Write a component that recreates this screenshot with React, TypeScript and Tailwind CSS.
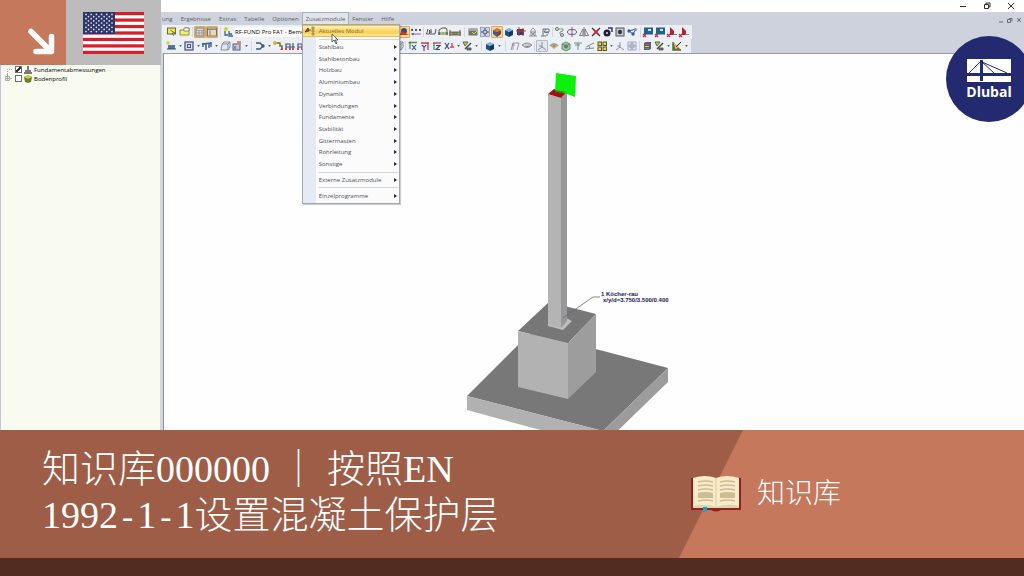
import React, { useState } from 'react';

type Tool = string;

const MENUS_LEFT = ['ung', 'Ergebnisse', 'Extras', 'Tabelle', 'Optionen'];
const MENUS_RIGHT = ['Fenster', 'Hilfe'];

const MODULES = [
  'Stahlbau',
  'Stahlbetonbau',
  'Holzbau',
  'Aluminiumbau',
  'Dynamik',
  'Verbindungen',
  'Fundamente',
  'Stabilität',
  'Gittermasten',
  'Rohrleitung',
  'Sonstige',
];

// '>' = drop-down caret, '|' = separator, '*' prefix = pressed button
const TOOLS_FILE: Tool[] = ['note', 'folder', '|4', '*table', '*window', '|4', 'module'];
const TOOLS_VIEW: Tool[] = [
  '*results', 'values', '|3', 'glasses', 'printer', 'ruler', '|6',
  'image', 'target', '*cubeRed', 'cubeBlue', 'cubeDark', 'tower', 'crane', '|3',
  'link', 'rotate', 'mirror', 'cross', 'sphere', 'camera', 'nodes', '|4',
  'screen', 'screen', 'flagRed', 'flagRed',
];
const TOOLS_MODEL: Tool[] = [
  'plate', '>', 'square', '>', 'columns', '>', 'box', 'boxPlus', '>', '|5',
  'beam', '>', 'support', 'frame', 'frame', 'frame', 'support', 'box', 'beam',
  'square', 'plate', 'columns', 'box', '|3',
  'axisX', 'axisY', 'axisZ', 'axisR', '>', 'pencil', '>', '|5',
  'cubeBlue', '>', '|7', 'portal', 'eye', '|3',
  '*axes', 'rainbow', 'green', 'level', 'slope', 'grid', '>', 'axes', 'mesh', '|3',
  'palette', 'pencil', '>', 'chart', '>',
];

const GLYPHS: Record<string, React.ReactNode> = {
  note: <><rect x="1.5" y="2" width="8" height="6" fill="#f3e94e" stroke="#6b6a2a" /><path d="M4 4l5 3-3 0 2 3" fill="#fff" stroke="#555" strokeWidth=".8" /></>,
  folder: <><path d="M2 4h4l1-2h4v7H2z" fill="#f6ef62" stroke="#77783c" strokeWidth=".8" /><path d="M6 2h5v3H6z" fill="#fff" stroke="#666" strokeWidth=".7" /></>,
  table: <><rect x="2" y="2" width="8" height="8" fill="#ddd" stroke="#777" /><path d="M2 4.5h8M5 4.5v5M8 4.5v5M2 7h8" stroke="#888" strokeWidth=".7" /></>,
  window: <><rect x="1.5" y="2" width="9" height="8" fill="#e8d9bb" stroke="#777" /><path d="M2 3.5h8M4 4v6" stroke="#888" /></>,
  module: <><circle cx="4" cy="3" r="2" fill="#c9d928" /><path d="M3 5v4h3M7 5v5h4M7 8h3" fill="none" stroke="#4b6278" strokeWidth="1.3" /></>,
  results: <><circle cx="6" cy="5" r="3" fill="#2e4d80" /><path d="M1 9l3-4 3 2 4 2z" fill="#c63d2b" /></>,
  values: <><path d="M1 3l2 2m0-2L1 5m4-2l2 2m0-2L5 5m4-2l2 2m0-2L9 5" stroke="#333" strokeWidth=".8" /><path d="M1 8h10" stroke="#9a5fa8" /><circle cx="3" cy="8" r="1" fill="#32549c" /></>,
  glasses: <path d="M3 3L1.500 8h3V4M7 8h3l1-5M6 9V3M4.500 6h2" fill="none" stroke="#555" />,
  printer: <><path d="M2 8V4l3-2h4l1 2v4z" fill="#eee" stroke="#555" /><path d="M1 6h10v3H1z" fill="#6c7180" /><path d="M4 9V6h1v3m2 0V6h1v3" stroke="#d6e36c" /></>,
  ruler: <><path d="M1 4v6M11 4v6" stroke="#555" /><rect x="1" y="6" width="10" height="3" fill="#a9ad72" stroke="#444" strokeWidth=".7" /><path d="M4 6v3M6 6v3M8 6v3" stroke="#333" strokeWidth=".6" /></>,
  image: <><rect x="1.500" y="2.500" width="9" height="7" fill="#6a7568" /><path d="M2 4h8" stroke="#ddd" /><path d="M5 6l2 2 3-3" stroke="#e6c94c" fill="none" /></>,
  target: <><rect x="1.500" y="1.500" width="9" height="9" fill="#cdd2e4" stroke="#8188a8" strokeWidth=".7" /><circle cx="6" cy="6" r="2" fill="none" stroke="#374b83" /><path d="M6 2v2M6 8v2M2 6h2M8 6h2" stroke="#374b83" strokeWidth=".8" /></>,
  cubeRed: <><path d="M2 4l4-2 4 2-4 2z" fill="#e2694a" /><path d="M2 4l4 2v5L2 8z" fill="#2a66a1" /><path d="M10 4L6 6v5l4-3z" fill="#83422c" /></>,
  cubeBlue: <><path d="M2 4l4-2 4 2-4 2z" fill="#7ab4dc" /><path d="M2 4l4 2v5L2 9z" fill="#1f4f86" /><path d="M10 4L6 6v5l4-2z" fill="#16375c" /></>,
  cubeDark: <><rect x="2" y="3" width="7" height="6" fill="#25406f" /><path d="M4 1v9M8 2v8M1 5h10" stroke="#c23a3f" /></>,
  tower: <path d="M4 10V4l2-2 2 2v6M3 6h6M4 10l4-4M8 10L4 6M2 10h8" fill="none" stroke="#888" strokeWidth=".9" />,
  crane: <path d="M2 10h5M4 10V3h6v3H5M7 3L5 6l5 1M8 8v2" fill="none" stroke="#6a7082" />,
  link: <><circle cx="3" cy="3" r="1.500" fill="none" stroke="#666" /><circle cx="8" cy="9" r="1.500" fill="none" stroke="#666" /><path d="M5 3h4v2L6 6v2" fill="none" stroke="#777" strokeWidth=".8" /></>,
  rotate: <><ellipse cx="6" cy="6" rx="4.500" ry="2.500" fill="none" stroke="#44609d" /><path d="M6 1v10" stroke="#b04d53" /></>,
  mirror: <path d="M5 3L1.500 9.500H5zM7 3l3.500 6.500H7zM6 1v10" fill="none" stroke="#666" strokeWidth=".8" />,
  cross: <><path d="M2 2l8 8M10 2l-8 8" stroke="#333" strokeWidth="1.200" /><path d="M3.500 3.500l5 5M8.500 3.500l-5 5" stroke="#d42332" strokeWidth="1.500" /></>,
  sphere: <><circle cx="5" cy="7" r="3.500" fill="#20203c" /><path d="M6 2h4v4" fill="none" stroke="#353560" strokeWidth="1.500" /><circle cx="5" cy="7" r="1" fill="#ddd" /></>,
  camera: <><rect x="2" y="2" width="8" height="8" fill="#c9ccd2" stroke="#555" /><circle cx="6" cy="6" r="2.200" fill="#32394a" /></>,
  nodes: <><path d="M3 5l4 3 3-5z" stroke="#33558e" fill="none" /><circle cx="3" cy="5" r="1.700" fill="#3c5a90" /><circle cx="7" cy="8" r="1.700" fill="#3c5a90" /><circle cx="9.500" cy="3.500" r="1.500" fill="#7a93bd" /></>,
  screen: <><rect x="2" y="1.500" width="9" height="7" fill="#23618e" /><rect x="6" y="3" width="3" height="2" fill="#cfe4f1" /><path d="M1 8l3 3M4 8l-3 3" stroke="#cf2c47" strokeWidth="1.400" /></>,
  flagRed: <><path d="M4 1l4 4v4H4z" fill="#b91f33" /><path d="M1 8l3 3M4 8l-3 3" stroke="#cf2c47" strokeWidth="1.200" /><path d="M7 8.500h4" stroke="#888" /></>,
  plate: <><path d="M3 5h7v4H3z" fill="#4f7a9a" /><path d="M2 9h9" stroke="#30485b" /><circle cx="3" cy="3" r="1.700" fill="#d9cf36" /></>,
  square: <><rect x="2" y="2" width="8" height="8" fill="#dce0ec" stroke="#4d5982" strokeWidth="1.300" /><rect x="4.500" y="4.500" width="3" height="3" fill="none" stroke="#4d5982" /></>,
  columns: <path d="M2 3v4M5 4v6M8 3v5M10 2v5M1 4l9-1" fill="none" stroke="#41658a" strokeWidth="1.500" />,
  box: <path d="M3 4h6v6H2zM3 4l2-2h6L9 4M11 2v5L9 10" fill="#e4e7ef" stroke="#7b8398" strokeWidth=".9" />,
  boxPlus: <><rect x="2" y="4" width="7" height="6" fill="#bec7d7" stroke="#57647f" /><path d="M6 1h4v4H6z" fill="#d98577" /><path d="M4 6v3" stroke="#33527d" /></>,
  beam: <><path d="M2 3h4l3 3-3 3H2" fill="none" stroke="#3d5578" strokeWidth="1.400" /><circle cx="9" cy="6" r="1.700" fill="#395c86" /></>,
  support: <><path d="M3 3h5v3h2v4" fill="none" stroke="#6b7434" strokeWidth="1.500" /><circle cx="3" cy="3" r="2" fill="#cdbc2b" /><path d="M8 10l2-3 1 3z" fill="#c93f4d" /></>,
  frame: <><path d="M2 10V4h4v6M9 10V3M2 7h9" fill="none" stroke="#485579" strokeWidth="1.200" /><path d="M1 9h2M5 9h2M8 9h2" stroke="#d33a4e" strokeWidth="1.500" /></>,
  axisX: <><path d="M3 2v7M3 2.500h7" fill="none" stroke="#2e9b63" strokeWidth="1.300" /><path d="M5 5l4 5M9 5l-4 5" stroke="#3a4873" strokeWidth="1.100" /><path d="M1.500 2.500h2" stroke="#d3394e" strokeWidth="1.500" /></>,
  axisY: <><path d="M2 3h8M9 3v7" fill="none" stroke="#d3394e" strokeWidth="1.300" /><path d="M3 5l2 2v4M7 5L5 7.500" stroke="#3a4873" fill="none" strokeWidth="1.100" /></>,
  axisZ: <><path d="M3 3v7" fill="none" stroke="#2e9b63" strokeWidth="1.300" /><path d="M2 3h8" stroke="#d3394e" strokeWidth="1.300" /><path d="M5 5.500h4l-4 4h4" stroke="#3a4873" fill="none" strokeWidth="1.100" /></>,
  axisR: <><path d="M2 3l4 6M6 3L2 9" stroke="#3a4873" strokeWidth="1.200" /><path d="M7 7h4M9 3v3" stroke="#d3394e" strokeWidth="1.300" /></>,
  pencil: <><path d="M2 2h5L4 6z" fill="#c8cf40" stroke="#444" strokeWidth=".8" /><path d="M10 3L4 9" stroke="#444" strokeWidth="1.400" /><path d="M6 8h4v2H6z" fill="#777" stroke="#444" strokeWidth=".8" /></>,
  portal: <path d="M2 10L4 3h6L8 10M3 5h3M4 3v7" fill="none" stroke="#8b8f97" strokeWidth=".9" />,
  eye: <><path d="M1 5q5-4 10 0q-5 5-10 0z" fill="#c9cbd1" stroke="#8b8f97" /><path d="M4 7l5-1" stroke="#888" /></>,
  axes: <path d="M6 2v5L2 10M6 7l4 3M3 6h3" fill="none" stroke="#7d879b" strokeWidth=".9" />,
  rainbow: <><path d="M1 6q5-6 10 0z" fill="#5bb2c9" /><path d="M2 6q4-3 8 0l-4 3z" fill="#d9ae59" /><circle cx="6" cy="6" r="1.300" fill="#cf6d72" /></>,
  green: <><path d="M2 4l4-2 4 2v5l-4 2-4-2z" fill="#9fc6a5" stroke="#5b9a70" /><circle cx="6" cy="6.500" r="2" fill="#37956d" /><path d="M2 4l4 2 4-2" stroke="#ba5d62" fill="none" /></>,
  level: <path d="M2 3h8M6 3v7M3 5h5" stroke="#798a86" fill="none" />,
  slope: <path d="M1 9l9-1M2 7l8-4M5 6l1 3" stroke="#858a92" fill="none" />,
  grid: <><rect x="2" y="2" width="3.500" height="3.500" fill="#e9d64a" stroke="#5b572c" /><rect x="7" y="2" width="3.500" height="3.500" fill="#e9d64a" stroke="#5b572c" /><rect x="2" y="7" width="3.500" height="3.500" fill="#e9d64a" stroke="#5b572c" /><rect x="7" y="7" width="3.500" height="3.500" fill="#e9d64a" stroke="#5b572c" /></>,
  mesh: <path d="M2 2h8v8H2zM6 2v8M2 6h8M4 4h4v4H4z" fill="none" stroke="#8a94ae" strokeWidth=".8" />,
  palette: <><path d="M3 3l2-1h5v7l-2 1H3z" fill="#5d616b" /><path d="M4 4.500h4" stroke="#db4b46" /><path d="M4 6.500h4" stroke="#e2cd49" /><path d="M4 8.500h4" stroke="#49a05e" /></>,
  chart: <><path d="M2 2v8h8z" fill="#da3131" /><path d="M2 2l3 4 5-4-5 8z" fill="#e7d83a" /><path d="M2 2v8h8" fill="none" stroke="#2b7d42" strokeWidth="1.400" /><path d="M5 7l5-5" stroke="#252525" /></>,
};

const SEPARATORS: Record<string, string> = {
  '|3': 'w-[3px]',
  '|4': 'w-1',
  '|5': 'w-[5px]',
  '|6': 'w-1.5',
  '|7': 'w-[7px]',
};

function ToolIcons({ items }: { items: Tool[] }) {
  return (
    <>
      {items.map((item, i) => {
        if (item === '>') {
          return (
            <span key={i} className="flex w-1.5 shrink-0 items-center justify-center">
              <svg viewBox="0 0 4 3" className="h-[2px] w-[3px]"><path d="M0 0h4L2 3z" fill="#555b66" /></svg>
            </span>
          );
        }
        if (item[0] === '|') {
          return (
            <span key={i} className={`${SEPARATORS[item]} flex shrink-0 items-center justify-center`}>
              <span className="h-2.5 w-px bg-[#d3d7e0]" />
            </span>
          );
        }
        const pressed = item[0] === '*';
        const name = pressed ? item.slice(1) : item;
        const warm = pressed && name !== 'axes';
        return (
          <button
            key={i}
            aria-label={name}
            className={`flex h-3 w-3 shrink-0 items-center justify-center rounded-[1px] ${
              warm ? 'bg-[#fbd692] outline outline-[#d9a863] -outline-offset-1' : pressed ? 'bg-[#e3e6ed] outline outline-[#b4bac6] -outline-offset-1' : ''
            }`}
          >
            <svg viewBox="0 0 12 12" className="h-3 w-3" fill="none">{GLYPHS[name]}</svg>
          </button>
        );
      })}
    </>
  );
}

function SubmenuItem({ label }: { label: string }) {
  return (
    <li className="flex flex-1">
      <button className="flex flex-1 items-center justify-between pl-4 pr-0.5 leading-none text-[#4d5057]">
        {label}
        <svg viewBox="0 0 3 4" className="h-1 w-[3px]"><path d="M0 0l3 2-3 2z" fill="#25272c" /></svg>
      </button>
    </li>
  );
}

function ModuleMenu() {
  return (
    <div className="absolute left-0 top-full z-10 -mt-px w-[98px] border border-[#a2a6ae] bg-[linear-gradient(90deg,#e6eaf2_13px,#fbfbfc_13px)] shadow-[1px_1px_1px_#00000030]">
      <button className="flex h-3 w-full items-center gap-1 border-y border-[#e7bd59] bg-[linear-gradient(180deg,#fdf0b5,#fbcf4e_60%,#fbe69a)] pl-0.5 leading-none text-[#816c37]">
        <svg viewBox="0 0 10 10" className="h-2.5 w-2.5">
          <path d="M0 6l3-4 1 3zM4 4h2" fill="#c9342b" stroke="#51331f" strokeWidth=".8" />
          <path d="M7 1h2v2H7zM7 4h2v2H7zM7 7h2v2H7z" fill="#d4d49b" stroke="#6c6a43" strokeWidth=".6" />
        </svg>
        Aktuelles Modul
      </button>
      <div className="ml-4 mt-0.5 border-t border-[#d3d6dc]" />
      <ul className="mt-px flex h-[129px] flex-col">
        {MODULES.map(m => <SubmenuItem key={m} label={m} />)}
      </ul>
      <div className="ml-4 mt-0.5 border-t border-[#d3d6dc]" />
      <ul className="flex h-[14px] flex-col"><SubmenuItem label="Externe Zusatzmodule" /></ul>
      <div className="ml-4 border-t border-[#d3d6dc]" />
      <ul className="flex h-[15px] flex-col"><SubmenuItem label="Einzelprogramme" /></ul>
      <svg viewBox="0 0 8 12" className="absolute left-7 top-2 h-3 w-2">
        <path d="M1 1v8l2-2 2 4 1-1-2-3h3z" fill="#fff" stroke="#444" strokeWidth=".8" />
      </svg>
    </div>
  );
}

function TreeRow({ label, checked, onChange, children, branch }: {
  label: string;
  checked: boolean;
  onChange: () => void;
  children: React.ReactNode;
  branch: React.ReactNode;
}) {
  return (
    <label className="flex h-[9px] items-center gap-0.5 pl-[3px] leading-none">
      <svg viewBox="0 0 8 9" className="h-[9px] w-2" fill="none">{branch}</svg>
      <input
        type="checkbox"
        checked={checked}
        onChange={onChange}
        className="ml-px h-[7px] w-[7px] appearance-none border border-[#6a6c6e] bg-white checked:bg-[linear-gradient(135deg,#fff_30%,#333_40%,#333_60%,#fff_70%)]"
      />
      <svg viewBox="0 0 8 8" className="h-2 w-2">{children}</svg>
      <span>{label}</span>
    </label>
  );
}

function FoundationModel() {
  return (
    <svg viewBox="164 54 860 376" preserveAspectRatio="xMidYMid slice" className="h-full w-full">
      <path d="M467 396L531 332 668 368 603 431z" fill="#787878" />
      <path d="M467 396L603 431V447L467 410z" fill="#b1b1b1" />
      <path d="M668 368V382L603 445V431z" fill="#9c9c9c" />
      <path d="M518 331L549 302 596 314 568 343z" fill="#777" />
      <path d="M518 331L568 343V399L518 387z" fill="#b2b2b2" />
      <path d="M568 343L596 314V372L568 399z" fill="#9d9d9d" />
      <path d="M548 322L566 318 572 321 563 330 548 326z" fill="#bdbdbd" />
      <path d="M548 94L561 98V328L548 324z" fill="#b4b4b4" />
      <path d="M561 98L567 92V321L561 328z" fill="#979797" />
      <path d="M548 94L554 89 567 92 561 98z" fill="#a50f14" />
      <path d="M556 73L576 76 575 97 567 94 555 91z" fill="#0cf00c" />
      <path d="M554 90L567 92 562 93 556 92z" fill="#2c8b12" />
      <path d="M563 318L593 297H600" fill="none" stroke="#66667c" strokeWidth=".8" />
      <g className="fill-[#15155a] font-['Liberation_Sans'] text-[6px] font-bold">
        <text x="601" y="296">1 Köcher-rau</text>
        <text x="603" y="302">x/y/d=3.750/3.500/0.400</text>
      </g>
    </svg>
  );
}

function Flag() {
  return (
    <svg viewBox="0 0 61 42" className="h-[42px] w-[61px]" preserveAspectRatio="none">
      <rect width="61" height="42" fill="#fff" />
      {[0, 1, 2, 3, 4, 5, 6].map(i => <rect key={i} y={(i * 84) / 13} width="61" height={42 / 13} fill="#d3202a" />)}
      <rect width="32" height="22" fill="#2f3668" />
      {Array.from({ length: 9 }).map((_, row) =>
        Array.from({ length: row % 2 ? 5 : 6 }).map((_, col) => (
          <circle key={`${row}-${col}`} cx={(row % 2 ? 5.500 : 3) + col * 5.200} cy={2.400 + row * 2.150} r=".85" fill="#dfe1ee" />
        ))
      )}
    </svg>
  );
}

function Logo() {
  return (
    <div className="absolute -right-2 top-9 z-20 flex h-[86px] w-[86px] flex-col items-center rounded-full bg-[#232a70] pt-[23px] text-white">
      <svg viewBox="0 0 44 23" className="h-[23px] w-11">
        <path d="M0 0h44v14H0zM0 17h44v6H0z" fill="#fff" />
        <path d="M2 14L14 2 27 14M15 3l25 11" fill="none" stroke="#232a70" strokeWidth="1" />
        <path d="M13 1h3v21h-3z" fill="#232a70" />
      </svg>
      <span className="font-['Open_Sans'] text-[14px] font-bold leading-5">Dlubal</span>
    </div>
  );
}

function Book() {
  return (
    <svg viewBox="0 0 50 36" className="h-9 w-[50px] shrink-0">
      <path d="M0 2h50v32H30q-5 3-10 0H0z" fill="#93201c" />
      <path d="M2 2q12-4 23 0q11-4 23 0v30H2z" fill="#f9ebc9" />
      <path d="M2 30q12-3 23 1q11-4 23-1v2H2z" fill="#d9d5ae" />
      <path d="M25 2v29" stroke="#ecdcb2" strokeWidth="2" />
      <g fill="none" stroke="#cdbd95" strokeWidth="1.500">
        <path d="M7 6q8-2 15 0M7 10q8-2 15 0M7 14q8-2 15 0M7 25q8-2 15 0" />
        <path d="M29 6q8-2 15 0M29 10q8-2 15 0M29 14q8-2 15 0M29 25q8-2 15 0" />
      </g>
      <path d="M7 17q8-2 15 0v5H7zM29 17q8-2 15 0v5H29z" fill="#cdbd95" />
      <path d="M12 31h4v5l-2-1-2 1z" fill="#12a0da" />
    </svg>
  );
}

function Dash() {
  return <span className="font-['Liberation_Mono',monospace] text-[32px] leading-none">-</span>;
}

export default function App() {
  const [dims, setDims] = useState(true);
  const [soil, setSoil] = useState(false);

  return (
    <div className="flex min-h-screen flex-col overflow-hidden bg-white">
      <main className="relative flex flex-1 flex-col font-['Open_Sans','Noto_Sans',sans-serif] text-[6px] text-[#3c3f45]">
        {/* Window title */}
        <div className="flex h-3 items-center justify-end gap-4 bg-[#fefefe] pr-[9px]">
          <button aria-label="Minimieren"><svg viewBox="0 0 8 8" className="h-2 w-2"><path d="M1 4.500h6" stroke="#333" /></svg></button>
          <button aria-label="Wiederherstellen"><svg viewBox="0 0 8 8" className="h-2 w-2" fill="none" stroke="#333"><path d="M1.500 2.500h4v4h-4zM3 2V1h4v4H6" /></svg></button>
          <button aria-label="Schließen"><svg viewBox="0 0 8 8" className="h-2 w-2" stroke="#333"><path d="M1 1l6 6M7 1L1 7" /></svg></button>
        </div>

        {/* Menu bar */}
        <div className="flex h-[13px] items-center justify-between bg-[#ced2dc] pl-[162px] pr-0.5 leading-none">
          <nav className="flex h-full items-center gap-2 text-[#595d67]">
            {MENUS_LEFT.map(m => <button key={m}>{m}</button>)}
            <div className="relative -mx-[5px] h-full">
              <button className="h-full border border-b-0 border-[#a9aeb9] bg-[#e1e4eb] px-[3px]">Zusatzmodule</button>
              <ModuleMenu />
            </div>
            {MENUS_RIGHT.map(m => <button key={m}>{m}</button>)}
          </nav>
          <div className="flex gap-[3px] pt-0.5">
            <svg viewBox="0 0 6 6" className="h-1.5 w-1.5"><path d="M1 5h4" stroke="#666b78" /></svg>
            <svg viewBox="0 0 6 6" className="h-1.5 w-1.5" fill="none" stroke="#666b78"><path d="M.5 2.500h3v3h-3zM2 1.500h3v3" /></svg>
            <svg viewBox="0 0 6 6" className="h-1.5 w-1.5" stroke="#666b78"><path d="M1 1l4 4M5 1L1 5" /></svg>
          </div>
        </div>

        {/* Toolbars */}
        <div className="flex h-7 flex-col items-start bg-[#ced2dc] pl-[162px]">
          <div className="flex h-3.5 items-center bg-[#eceff4] pl-1 pr-0.5">
            <ToolIcons items={TOOLS_FILE} />
            <select aria-label="Bemessungsfall" className="ml-px h-2.5 w-[163px] appearance-none bg-white leading-none text-black">
              <option>RF-FUND Pro FA1 - Bemessung</option>
            </select>
            <ToolIcons items={TOOLS_VIEW} />
          </div>
          <div className="flex h-3.5 items-center bg-[#eceff4] pl-[3px] pr-0.5">
            <ToolIcons items={TOOLS_MODEL} />
          </div>
        </div>

        {/* Navigator and work area */}
        <div className="flex min-h-0 flex-1">
          <aside className="w-40 border-l border-[#c4c5d6] bg-[#f9fbf0] pt-3 text-black">
            <TreeRow
              label="Fundamentabmessungen"
              checked={dims}
              onChange={() => setDims(!dims)}
              branch={<path d="M3.500 9V4.500H8" stroke="#aaa" strokeDasharray="1 1" />}
            >
              <path d="M3 0h2v4h2v2h1v2H0V6h1V4h2z" fill="#777b7e" />
            </TreeRow>
            <TreeRow
              label="Bodenprofil"
              checked={soil}
              onChange={() => setSoil(!soil)}
              branch={<><path d="M3.500 0v2M6 4.500h2" stroke="#aaa" /><path d="M1.500 2.500h4v4h-4zM2 4.500h3M3.500 3v3" stroke="#999" strokeWidth=".8" /></>}
            >
              <path d="M0 2l4-2 4 2-1 5-3 1-3-1z" fill="#777a2e" />
              <path d="M0 2l4-2 4 2-4 2z" fill="#c7d33c" />
            </TreeRow>
          </aside>
          <div className="w-1 border-r border-[#8f9096] bg-[#d3d5df]" />
          <section className="relative flex-1 border-t border-[#9b9b9b] bg-[#fefefe]">
            <div className="absolute inset-0">
              <FoundationModel />
            </div>
          </section>
        </div>

        {/* Corner badges */}
        <div className="absolute left-0 top-0 flex h-[65px]">
          <div className="w-[66px] bg-[#c6785d]">
            <svg viewBox="0 0 66 65" className="h-full w-full" fill="none" stroke="#fff" strokeWidth="5.500" strokeLinecap="round" strokeLinejoin="round">
              <path d="M31 31.500L51 51.500M51.500 36.500V51.500H36" />
            </svg>
          </div>
          <div className="flex w-[95px] items-center justify-center bg-[#bcbcbc]">
            <Flag />
          </div>
        </div>
        <Logo />
      </main>

      <footer className="font-['Liberation_Serif','Noto_Sans_CJK_SC',serif] text-white">
        <div className="flex h-32 items-center justify-between bg-[#9e5d47] pl-[42px]">
          <h1 className="pb-1 text-[38px] font-light leading-[46px]">
            知识库000000 ｜ 按照EN
            <br />
            1992<Dash />1<Dash />1设置混凝土保护层
          </h1>
          <div className="relative flex h-full w-[345px] items-center pl-3">
            <span className="absolute inset-0 bg-[#c6785d] [clip-path:polygon(64px_0,100%_0,100%_100%,0_100%)]" />
            <span className="relative flex items-center gap-4">
              <Book />
              <a href="#" className="text-[28px] font-light leading-9">知识库</a>
            </span>
          </div>
        </div>
        <div className="h-[18px] bg-[#522c20]" />
      </footer>
    </div>
  );
}
